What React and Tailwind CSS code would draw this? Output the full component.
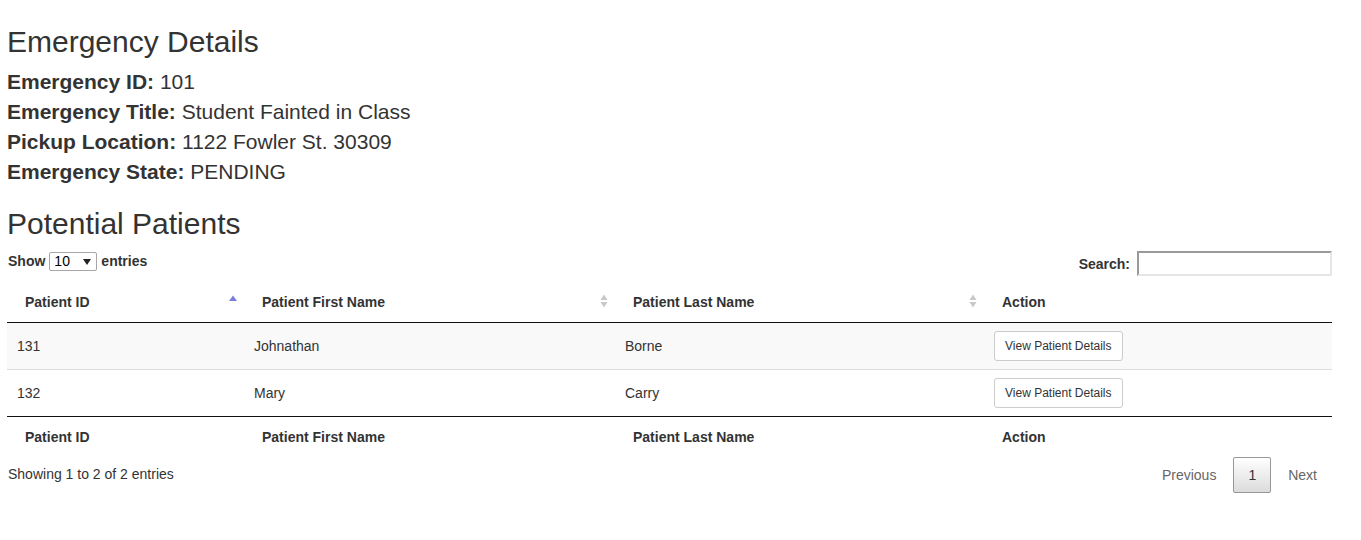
import { useState } from 'react'

const patients = [
  { id: 131, first: 'Johnathan', last: 'Borne' },
  { id: 132, first: 'Mary', last: 'Carry' },
]

function SortAsc() {
  return (
    <svg width="14" height="20" viewBox="0 0 14 20" className="shrink-0">
      <path d="M3 9 L7 3.5 L11 9 Z" fill="#7b7bdb" />
    </svg>
  )
}

function SortBoth() {
  return (
    <svg width="14" height="20" viewBox="0 0 14 20" className="shrink-0">
      <path d="M3.5 8 L7 2.5 L10.5 8 Z" fill="#c8c8c8" />
      <path d="M3.5 10 L7 15.5 L10.5 10 Z" fill="#c8c8c8" />
    </svg>
  )
}

function HeadCell({ children, sort }) {
  return (
    <th className="border-b border-[#111] py-[10px] pl-[18px] pr-[4px] text-left font-bold">
      <div className="flex items-center justify-between">
        <span>{children}</span>
        {sort === 'asc' && <SortAsc />}
        {sort === 'both' && <SortBoth />}
      </div>
    </th>
  )
}

function App() {
  const [search, setSearch] = useState('')
  const [pageSize, setPageSize] = useState('10')

  return (
    <div className="min-h-screen bg-white font-[family-name:'Liberation_Sans',Arial,sans-serif] text-[#333]">
      <div className="ml-[7px] w-[1325px]">
        <h2 className="mt-[25px] mb-[9px] text-[30px] leading-[33px] font-normal">Emergency Details</h2>
        <div className="text-[21px] leading-[30px]">
          <div><b>Emergency ID:</b> 101</div>
          <div><b>Emergency Title:</b> Student Fainted in Class</div>
          <div><b>Pickup Location:</b> 1122 Fowler St. 30309</div>
          <div><b>Emergency State:</b> PENDING</div>
        </div>

        <h2 className="mt-[20px] mb-[10px] text-[30px] leading-[33px] font-normal">Potential Patients</h2>

        <div className="flex h-[32px] items-start justify-between text-[14px] font-bold leading-[20px]">
          <label className="mt-[1px] flex items-center pl-[1px]">
            Show
            <span className="relative mx-[4px] inline-block">
              <select
                value={pageSize}
                onChange={(e) => setPageSize(e.target.value)}
                className="block h-[19px] w-[48px] appearance-none rounded-[2px] border border-[#a6a6a6] bg-white pl-[4px] text-[14px] leading-[17px] font-normal text-black outline-none"
              >
                <option>10</option>
                <option>25</option>
                <option>50</option>
                <option>100</option>
              </select>
              <svg width="8" height="6" viewBox="0 0 8 6" className="pointer-events-none absolute top-[7px] right-[6px]">
                <path d="M0 0 L8 0 L4 6 Z" fill="#222" />
              </svg>
            </span>
            entries
          </label>
          <label className="mt-[1px] flex items-center">
            Search:
            <input
              value={search}
              onChange={(e) => setSearch(e.target.value)}
              className="ml-[7px] h-[25px] w-[195px] border-2 border-t-[#9a9a9a] border-l-[#9a9a9a] border-r-[#e6e6e6] border-b-[#e6e6e6] bg-white px-1 text-[14px] font-normal outline-none"
            />
          </label>
        </div>

        <table className="w-full table-fixed border-separate border-spacing-0 text-[14px] leading-[20px]">
          <colgroup>
            <col className="w-[237px]" />
            <col className="w-[371px]" />
            <col className="w-[369px]" />
            <col className="w-[348px]" />
          </colgroup>
          <thead>
            <tr>
              <HeadCell sort="asc">Patient ID</HeadCell>
              <HeadCell sort="both">Patient First Name</HeadCell>
              <HeadCell sort="both">Patient Last Name</HeadCell>
              <HeadCell>Action</HeadCell>
            </tr>
          </thead>
          <tbody>
            {patients.map((p, i) => (
              <tr key={p.id} className={i % 2 === 0 ? 'bg-[#f9f9f9]' : 'bg-white'}>
                <td className={`px-[10px] py-[8px] ${i > 0 ? 'border-t border-[#ddd]' : ''}`}>{p.id}</td>
                <td className={`px-[10px] py-[8px] ${i > 0 ? 'border-t border-[#ddd]' : ''}`}>{p.first}</td>
                <td className={`px-[10px] py-[8px] ${i > 0 ? 'border-t border-[#ddd]' : ''}`}>{p.last}</td>
                <td className={`px-[10px] py-[8px] ${i > 0 ? 'border-t border-[#ddd]' : ''}`}>
                  <button
                    type="button"
                    className="rounded-[3px] border border-[#ccc] bg-white px-[10px] py-[5px] text-[12px] leading-[18px] text-[#333]"
                  >
                    View Patient Details
                  </button>
                </td>
              </tr>
            ))}
          </tbody>
          <tfoot>
            <tr>
              <th className="border-t border-[#111] px-[18px] pt-[10px] pb-[6px] text-left font-bold">Patient ID</th>
              <th className="border-t border-[#111] px-[18px] pt-[10px] pb-[6px] text-left font-bold">Patient First Name</th>
              <th className="border-t border-[#111] px-[18px] pt-[10px] pb-[6px] text-left font-bold">Patient Last Name</th>
              <th className="border-t border-[#111] px-[18px] pt-[10px] pb-[6px] text-left font-bold">Action</th>
            </tr>
          </tfoot>
        </table>

        <div className="flex items-start justify-between text-[14px] leading-[20px]">
          <div className="pt-[10.5px] pl-[1px]">Showing 1 to 2 of 2 entries</div>
          <div className="flex pt-[3.5px]">
            <span className="border border-transparent px-[14px] py-[7px] text-[#666]">Previous</span>
            <span className="ml-[2px] rounded-[2px] border border-[#979797] bg-gradient-to-b from-white to-[#dcdcdc] px-[14px] py-[7px] text-[#333]">1</span>
            <span className="ml-[2px] border border-transparent px-[14px] py-[7px] text-[#666]">Next</span>
          </div>
        </div>
      </div>
    </div>
  )
}

export default App
